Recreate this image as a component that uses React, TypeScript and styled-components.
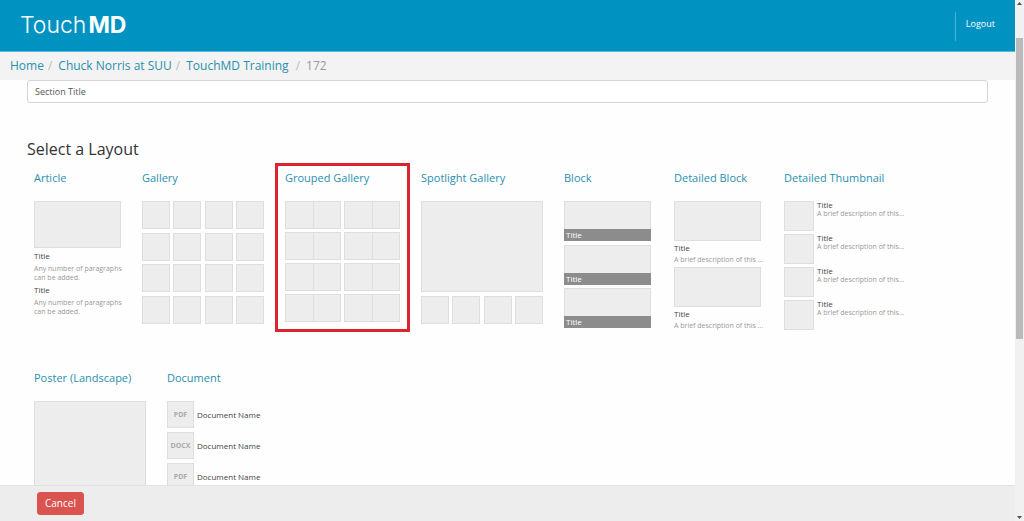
import React from "react";
import styled, { createGlobalStyle, css } from "styled-components";

const GlobalStyle = createGlobalStyle`
  *, *::before, *::after { box-sizing: border-box; }
  body {
    margin: 0;
    overflow: hidden;
    background: #fefefe;
    color: #444;
    font-family: "Open Sans", "Noto Sans", sans-serif;
    font-size: 10px;
  }
  h1, h2, p, ol, ul { margin: 0; padding: 0; font-weight: 400; }
  ol, ul { list-style: none; }
  a { text-decoration: none; }
`;

const Shell = styled.div`
  display: flex;
  height: 100vh;
`;

const Page = styled.div`
  display: flex;
  flex: 1;
  flex-direction: column;
  min-width: 0;
`;

const Header = styled.header`
  display: flex;
  flex: none;
  align-items: flex-start;
  justify-content: space-between;
  height: 52px;
  padding: 0 20px;
  background: #0093c2;
  border-bottom: 1px solid #5cb9d8;
`;

const Logo = styled.a`
  color: #fff;
  font-family: Inter, "Open Sans", sans-serif;
  font-size: 23px;
  line-height: 50px;
  font-weight: 300;

  strong {
    margin-left: 2px;
    font-weight: 700;
  }
`;

const Logout = styled.a`
  margin-top: 12px;
  padding: 0 0 6px 10px;
  border-left: 1px solid #4db3d4;
  color: #fff;
  font-size: 9px;
  line-height: 23px;
`;

const Breadcrumb = styled.nav`
  flex: none;
  padding: 0 10px;
  background: #f3f3f3;

  ol { display: flex; }
`;

const Crumb = styled.li`
  color: #999;
  font-size: 12px;
  line-height: 28px;

  a { color: #2a8fae; }
  & + &::before {
    content: "/";
    padding: 0 6px 0 4px;
    color: #bbb;
  }
  &:last-child { padding-left: 3px; }
`;

const Content = styled.main`
  flex: 1;
  min-height: 0;
  overflow: hidden;
  padding: 0 27px;
`;

const TitleInput = styled.input`
  display: block;
  width: 100%;
  height: 23px;
  padding: 0 7px 1px;
  border: 1px solid #d4d4d4;
  border-radius: 3px;
  background: #fff;
  color: #555;
  font: inherit;
  font-size: 9px;

  &::placeholder { color: #555; opacity: 1; }
`;

const Heading = styled.h1`
  margin-top: 34px;
  color: #333;
  font-size: 16px;
  line-height: 24px;
`;

const Layouts = styled.ul`
  display: flex;
  flex-wrap: wrap;
  align-items: flex-start;
  gap: 23px 1px;
  margin: 2px -3px 0;
`;

const Card = styled.li<{ $selected?: boolean }>`
  padding: 0 7px 7px;
  border: 3px solid ${(p) => (p.$selected ? "#dc2430" : "transparent")};
`;

const CardTitle = styled.h2`
  margin-bottom: 12px;
  font-size: 11px;
  line-height: 23px;
  white-space: nowrap;

  a { color: #2a8fae; }
`;

const tile = css`
  background: #ededed;
  border: 1px solid #dedede;
`;

const Tile = styled.div<{ $w: number; $h: number }>`
  ${tile}
  width: ${(p) => p.$w}px;
  height: ${(p) => p.$h}px;
`;

const Tiles = styled.div<{ $cols: number; $w?: number; $h?: number }>`
  display: grid;
  grid-template-columns: repeat(${(p) => p.$cols}, max-content);
  gap: 3px;
  place-content: space-between;
  width: ${(p) => (p.$w ? `${p.$w}px` : "auto")};
  height: ${(p) => (p.$h ? `${p.$h}px` : "auto")};
`;

const Pair = styled.div`
  display: flex;

  > * + * { border-left-width: 0; }
`;

const Stack = styled.div<{ $gap: number; $w?: number; $h?: number }>`
  display: flex;
  flex-direction: column;
  justify-content: space-between;
  gap: ${(p) => p.$gap}px;
  width: ${(p) => (p.$w ? `${p.$w}px` : "auto")};
  height: ${(p) => (p.$h ? `${p.$h}px` : "auto")};
`;

const Name = styled.p<{ $line: number }>`
  color: #444;
  font-size: 8px;
  line-height: ${(p) => p.$line}px;
`;

const Note = styled.p<{ $line: number }>`
  color: #999;
  font-size: 7px;
  line-height: ${(p) => p.$line}px;
  white-space: nowrap;
`;

const Block = styled.div`
  ${tile}
  display: flex;
  align-items: flex-end;
  width: 87px;
  height: 40px;
  border-bottom: 0;
`;

const BlockCaption = styled.span`
  flex: 1;
  margin: 0 -1px;
  padding-left: 2px;
  background: #8c8c8c;
  color: #fff;
  font-size: 8px;
  line-height: 12px;
`;

const MediaRow = styled.div<{ $center?: boolean }>`
  display: flex;
  align-items: ${(p) => (p.$center ? "center" : "flex-start")};
  gap: 3px;
`;

const FileType = styled.div`
  ${tile}
  width: 27px;
  height: 27px;
  color: #aaa;
  font-size: 7px;
  font-weight: 700;
  line-height: 25px;
  text-align: center;
`;

const Footer = styled.footer`
  flex: none;
  padding: 6px 37px;
  background: #ededed;
  border-top: 1px solid #e2e2e2;
`;

const CancelButton = styled.button`
  display: block;
  padding: 0 7px;
  border: 1px solid #d9534f;
  border-radius: 3px;
  background: #d9534f;
  color: #fff;
  font: inherit;
  line-height: 21px;
`;

const ScrollTrack = styled.div`
  display: flex;
  flex: none;
  flex-direction: column;
  align-items: center;
  justify-content: space-between;
  width: 9px;
  padding: 2px 0;
  background: #f1f1f1;
`;

const ScrollRun = styled.div`
  flex: 1;
  width: 7px;
  padding-top: 33px;
`;

const ScrollThumb = styled.div`
  height: 63%;
  background: #bababa;
`;

const Arrow = ({ down = false }: { down?: boolean }) => (
  <svg width="5" height="3" viewBox="0 0 5 3" aria-hidden="true">
    <path d={down ? "M0 0h5L2.5 3z" : "M0 3h5L2.5 0z"} fill="#505050" />
  </svg>
);

const times = (n: number) => Array.from({ length: n }, (_, i) => i);

type LayoutProps = { title: string; selected?: boolean; children: React.ReactNode };

const LayoutCard = ({ title, selected, children }: LayoutProps) => (
  <Card $selected={selected}>
    <CardTitle><a href="#">{title}</a></CardTitle>
    {children}
  </Card>
);

export default function App() {
  return (
    <>
      <GlobalStyle />
      <Shell>
        <Page>
          <Header>
            <Logo href="#">Touch<strong>MD</strong></Logo>
            <Logout href="#">Logout</Logout>
          </Header>
          <Breadcrumb aria-label="Breadcrumb">
            <ol>
              <Crumb><a href="#">Home</a></Crumb>
              <Crumb><a href="#">Chuck Norris at SUU</a></Crumb>
              <Crumb><a href="#">TouchMD Training</a></Crumb>
              <Crumb>172</Crumb>
            </ol>
          </Breadcrumb>
          <Content>
            <TitleInput aria-label="Section Title" placeholder="Section Title" />
            <Heading>Select a Layout</Heading>
            <Layouts>
              <LayoutCard title="Article">
                <Stack $gap={0} $w={87}>
                  <Tile $w={87} $h={47} />
                  {times(2).map((i) => (
                    <React.Fragment key={i}>
                      <Name $line={16}>Title</Name>
                      <Note $line={9}>Any number of paragraphs<br />can be added.</Note>
                    </React.Fragment>
                  ))}
                </Stack>
              </LayoutCard>
              <LayoutCard title="Gallery">
                <Tiles $cols={4} $w={122} $h={123}>
                  {times(16).map((i) => <Tile key={i} $w={28} $h={28} />)}
                </Tiles>
              </LayoutCard>
              <LayoutCard title="Grouped Gallery" selected>
                <Tiles $cols={2}>
                  {times(8).map((i) => (
                    <Pair key={i}>
                      <Tile $w={29} $h={28} />
                      <Tile $w={27} $h={28} />
                    </Pair>
                  ))}
                </Tiles>
              </LayoutCard>
              <LayoutCard title="Spotlight Gallery">
                <Stack $gap={4}>
                  <Tile $w={122} $h={91} />
                  <Tiles $cols={4} $w={122}>
                    {times(4).map((i) => <Tile key={i} $w={28} $h={28} />)}
                  </Tiles>
                </Stack>
              </LayoutCard>
              <LayoutCard title="Block">
                <Stack $gap={3} $w={89} $h={127}>
                  {times(3).map((i) => (
                    <Block key={i}><BlockCaption>Title</BlockCaption></Block>
                  ))}
                </Stack>
              </LayoutCard>
              <LayoutCard title="Detailed Block">
                <Stack $gap={3} $w={89}>
                  {times(2).map((i) => (
                    <div key={i}>
                      <Tile $w={87} $h={40} />
                      <Name $line={14}>Title</Name>
                      <Note $line={9}>A brief description of this ...</Note>
                    </div>
                  ))}
                </Stack>
              </LayoutCard>
              <LayoutCard title="Detailed Thumbnail">
                <Stack $gap={3}>
                  {times(4).map((i) => (
                    <MediaRow key={i}>
                      <Tile $w={30} $h={30} />
                      <div>
                        <Name $line={8}>Title</Name>
                        <Note $line={9}>A brief description of this...</Note>
                      </div>
                    </MediaRow>
                  ))}
                </Stack>
              </LayoutCard>
              <LayoutCard title="Poster (Landscape)">
                <Tile $w={112} $h={88} />
              </LayoutCard>
              <LayoutCard title="Document">
                <Stack $gap={4}>
                  {["PDF", "DOCX", "PDF"].map((type, i) => (
                    <MediaRow key={i} $center>
                      <FileType>{type}</FileType>
                      <Name $line={12}>Document Name</Name>
                    </MediaRow>
                  ))}
                </Stack>
              </LayoutCard>
            </Layouts>
          </Content>
          <Footer>
            <CancelButton type="button">Cancel</CancelButton>
          </Footer>
        </Page>
        <ScrollTrack aria-hidden="true">
          <Arrow />
          <ScrollRun><ScrollThumb /></ScrollRun>
          <Arrow down />
        </ScrollTrack>
      </Shell>
    </>
  );
}
